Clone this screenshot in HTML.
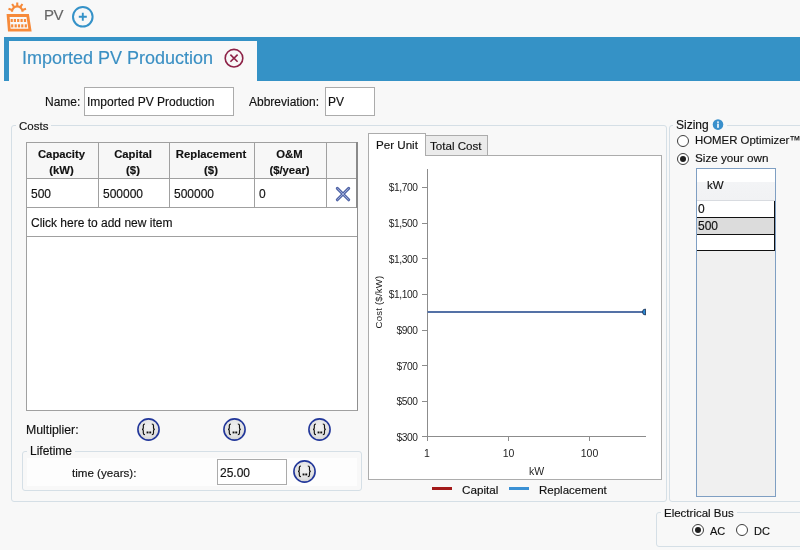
<!DOCTYPE html>
<html><head><meta charset="utf-8">
<style>
*{box-sizing:border-box;margin:0;padding:0}
body{-webkit-text-stroke:0.15px currentColor}
html,body{width:800px;height:550px;overflow:hidden;background:#f8f8f8;font-family:"Liberation Sans",sans-serif;color:#111}
.a{position:absolute}
.t{position:absolute;white-space:nowrap;font-size:12px;line-height:12px;will-change:transform}
.grp{position:absolute;border:1px solid #d5dfe6;border-radius:3px}
.lbl{position:absolute;background:#f8f8f8;padding:0 3px;white-space:nowrap;font-size:12px;line-height:12px;will-change:transform}
.inp{position:absolute;background:#fff;border:1px solid #ababab}
.btn{position:absolute;width:23px;height:23px;border-radius:50%;border:1.5px solid #2b3f9b;background:radial-gradient(circle at 50% 35%,#f4f4f4 0%,#e2e2e2 60%,#d4d4d4 100%)}
.btn span{position:absolute;left:0;right:0;top:4px;text-align:center;font-size:11px;line-height:12px;color:#111;letter-spacing:-0.5px}
.radio{position:absolute;width:12px;height:12px;border-radius:50%;border:1px solid #3c3c3c;background:#fff}
.radio.on::after{content:"";position:absolute;left:2px;top:2px;width:6px;height:6px;border-radius:50%;background:#1f1f1f}
</style></head><body>

<svg width="0" height="0" style="position:absolute"><defs>
<radialGradient id="bg" cx="50%" cy="40%" r="60%"><stop offset="0" stop-color="#f2f2f2"/><stop offset="0.7" stop-color="#e2e2e2"/><stop offset="1" stop-color="#d2d2d2"/></radialGradient>
<symbol id="mb" viewBox="0 0 23 23">
<circle cx="11.5" cy="11.5" r="10.6" fill="url(#bg)" stroke="#22379a" stroke-width="1.6"/>
<path d="M8 6 Q6.3 6 6.3 7.6 V9.9 Q6.3 11.3 5 11.3 Q6.3 11.3 6.3 12.7 V15.1 Q6.3 16.7 8 16.7 M14.8 6 Q16.5 6 16.5 7.6 V9.9 Q16.5 11.3 17.8 11.3 Q16.5 11.3 16.5 12.7 V15.1 Q16.5 16.7 14.8 16.7" fill="none" stroke="#111" stroke-width="1.15"/>
<rect x="9.6" y="13.5" width="1.9" height="1.9" fill="#111"/><rect x="12.3" y="13.5" width="1.9" height="1.9" fill="#111"/>
</symbol></defs></svg>
<!-- top header -->
<svg class="a" style="left:0;top:0" width="40" height="36" viewBox="0 0 40 36">
  <g fill="none" stroke="#f68a3a">
    <path d="M11.95 11.7 A5.3 5.3 0 0 1 22.55 11.7" stroke-width="2.2"/>
    <path d="M12.02 9.90 L8.50 8.76 M14.17 7.04 L12.11 3.97 M17.25 6.10 L17.25 2.40 M20.33 7.04 L22.39 3.97 M22.48 9.90 L26.00 8.76" stroke-width="2.1"/>
    <path d="M8.1 15.5 H27.7 L30 30.2 H9.3 Z" stroke-width="2.8" stroke-linejoin="miter"/>
  </g>
  <g fill="#f68a3a">
    <rect x="10.6" y="19" width="2.2" height="3"/><rect x="13.8" y="19" width="2.2" height="3"/><rect x="17.1" y="19" width="2.2" height="3"/><rect x="20.5" y="19" width="2.2" height="3"/><rect x="23.9" y="19" width="2.2" height="3"/>
    <rect x="11.1" y="24.3" width="2.2" height="3.1"/><rect x="14.6" y="24.3" width="2.2" height="3.1"/><rect x="17.9" y="24.3" width="2.2" height="3.1"/><rect x="21.2" y="24.3" width="2.2" height="3.1"/><rect x="24.7" y="24.3" width="2.2" height="3.1"/>
  </g>
</svg>
<div class="t" style="left:44px;top:7px;font-size:15px;line-height:15px;letter-spacing:-0.6px;color:#666">PV</div>
<svg class="a" style="left:70px;top:4px" width="26" height="26" viewBox="0 0 26 26">
  <circle cx="12.8" cy="12.8" r="9.8" fill="none" stroke="#3592c8" stroke-width="2"/>
  <path d="M8.8 12.8 H16.8 M12.8 8.8 V16.8" stroke="#3592c8" stroke-width="1.9"/>
</svg>

<!-- blue band + tab -->
<div class="a" style="left:4px;top:37px;width:796px;height:44px;background:#3592c6"></div>
<div class="a" style="left:9px;top:41px;width:248px;height:40px;background:#f8f8f8"></div>
<div class="t" style="left:22px;top:49px;font-size:18px;line-height:18px;color:#3a8fc3">Imported PV Production</div>
<svg class="a" style="left:222px;top:46px" width="24" height="24" viewBox="0 0 24 24">
  <circle cx="12" cy="12.2" r="8.8" fill="none" stroke="#8d2247" stroke-width="1.6"/>
  <path d="M8.4 8.6 L15.6 15.8 M15.6 8.6 L8.4 15.8" stroke="#8d2247" stroke-width="1.6"/>
</svg>

<!-- name row -->
<div class="t" style="left:45px;top:96px">Name:</div>
<div class="inp" style="left:84px;top:87px;width:150px;height:29px"></div>
<div class="t" style="left:87px;top:96px">Imported PV Production</div>
<div class="t" style="left:249px;top:96px">Abbreviation:</div>
<div class="inp" style="left:325px;top:87px;width:50px;height:29px"></div>
<div class="t" style="left:328px;top:96px">PV</div>

<!-- Costs group -->
<div class="grp" style="left:11px;top:125px;width:656px;height:377px"></div>
<div class="lbl" style="left:16px;top:120px;font-size:11.5px">Costs</div>


<!-- costs table -->
<div class="a" style="left:26px;top:142px;width:332px;height:269px;background:#fff;border:1px solid #a0a0a0;border-right-color:#8f8f8f"></div>
<div class="a" style="left:27px;top:143px;width:330px;height:35px;background:#f7f7f7"></div>
<div class="a" style="left:27px;top:178px;width:330px;height:1px;background:#a0a0a0"></div>
<div class="a" style="left:27px;top:207px;width:330px;height:1px;background:#a0a0a0"></div>
<div class="a" style="left:27px;top:236px;width:330px;height:1px;background:#a0a0a0"></div>
<div class="a" style="left:356px;top:142px;width:2px;height:66px;background:#8a8a8a"></div>
<div class="a" style="left:98px;top:143px;width:1px;height:64px;background:#a0a0a0"></div>
<div class="a" style="left:169px;top:143px;width:1px;height:64px;background:#a0a0a0"></div>
<div class="a" style="left:254px;top:143px;width:1px;height:64px;background:#a0a0a0"></div>
<div class="a" style="left:326px;top:143px;width:1px;height:64px;background:#a0a0a0"></div>
<div class="t" style="left:25.5px;width:71px;top:146px;text-align:center;font-weight:bold;font-size:11.3px;line-height:16px">Capacity<br>(kW)</div>
<div class="t" style="left:97.5px;width:70px;top:146px;text-align:center;font-weight:bold;font-size:11.3px;line-height:16px">Capital<br>($)</div>
<div class="t" style="left:168.5px;width:84px;top:146px;text-align:center;font-weight:bold;font-size:11.3px;line-height:16px">Replacement<br>($)</div>
<div class="t" style="left:253.5px;width:71px;top:146px;text-align:center;font-weight:bold;font-size:11.3px;line-height:16px">O&amp;M<br>($/year)</div>
<div class="t" style="left:31px;top:188px">500</div>
<div class="t" style="left:103px;top:188px">500000</div>
<div class="t" style="left:174px;top:188px">500000</div>
<div class="t" style="left:259px;top:188px">0</div>
<svg class="a" style="left:334px;top:185px" width="17" height="17" viewBox="0 0 17 17">
  <path d="M3.3 3.4 L14.7 14.8 M14.7 3.4 L3.3 14.8" stroke="#5064a6" stroke-width="3" stroke-linecap="round"/>
  <path d="M3.6 3.7 L14.4 14.5 M14.4 3.7 L3.6 14.5" stroke="#a9b7e0" stroke-width="0.9" stroke-linecap="round"/>
</svg>
<div class="t" style="left:31px;top:217px">Click here to add new item</div>

<!-- multipliers -->
<div class="t" style="left:26px;top:424px;font-size:12.3px">Multiplier:</div>
<svg class="a" style="left:137px;top:418px" width="23" height="23"><use href="#mb"/></svg>
<svg class="a" style="left:223px;top:418px" width="23" height="23"><use href="#mb"/></svg>
<svg class="a" style="left:308px;top:418px" width="23" height="23"><use href="#mb"/></svg>

<!-- lifetime -->
<div class="grp" style="left:22px;top:451px;width:340px;height:40px"></div>
<div class="a" style="left:27px;top:458px;width:330px;height:28px;background:#fdfdfd"></div>
<div class="lbl" style="left:27px;top:445px">Lifetime</div>
<div class="t" style="left:72px;top:467px;font-size:11.6px">time (years):</div>
<div class="inp" style="left:217px;top:459px;width:70px;height:26px"></div>
<div class="t" style="left:220px;top:467px">25.00</div>
<svg class="a" style="left:293px;top:460px" width="23" height="23"><use href="#mb"/></svg>


<!-- chart -->
<div class="a" style="left:368px;top:155px;width:294px;height:325px;background:#fff;border:1px solid #acacac"></div>
<div class="a" style="left:425px;top:135px;width:63px;height:21px;background:#ebebeb;border:1px solid #acacac"></div>
<div class="a" style="left:368px;top:133px;width:58px;height:23px;background:#fff;border:1px solid #acacac;border-bottom:none"></div>
<div class="t" style="left:376px;top:139px;font-size:11.6px">Per Unit</div>
<div class="t" style="left:430px;top:140px;font-size:11.6px">Total Cost</div>
<svg class="a" style="left:369px;top:156px;will-change:transform" width="292" height="323" viewBox="369 156 292 323">
  <g stroke="#8c8c8c" stroke-width="1" fill="none">
    <path d="M427.5 169 V436.5 H646"/>
    <path d="M422 187.5 H427 M422 223.5 H427 M422 258.5 H427 M422 294.5 H427 M422 330.5 H427 M422 365.5 H427 M422 401.5 H427 M422 436.5 H427"/>
    <path d="M427.5 436 V441 M508.5 436 V441 M589.5 436 V441"/>
  </g>
  <g font-family="Liberation Sans" font-size="10.2" letter-spacing="-0.4" fill="#1e1e1e" text-anchor="end">
    <text x="417.5" y="191.3">$1,700</text>
    <text x="417.5" y="227">$1,500</text>
    <text x="417.5" y="262.6">$1,300</text>
    <text x="417.5" y="298.2">$1,100</text>
    <text x="417.5" y="333.9">$900</text>
    <text x="417.5" y="369.5">$700</text>
    <text x="417.5" y="405.1">$500</text>
    <text x="417.5" y="440.7">$300</text>
  </g>
  <g font-family="Liberation Sans" font-size="10.5" fill="#1e1e1e" text-anchor="middle">
    <text x="427" y="457">1</text>
    <text x="508.5" y="457">10</text>
    <text x="589.5" y="457">100</text>
    <text x="536.5" y="475">kW</text>
    <text x="382" y="302" font-size="9.6" letter-spacing="0.2" transform="rotate(-90 382 302)">Cost ($/kW)</text>
  </g>
  <path d="M427.5 312 H645" stroke="#5471a6" stroke-width="1.8"/>
  <path d="M645.5 309 A3 3 0 0 0 645.5 315 Z" fill="#2d8ad6" stroke="#1c3050" stroke-width="0.8"/>
</svg>
<div class="a" style="left:432px;top:487px;width:20px;height:3px;background:#a31a1a"></div>
<div class="t" style="left:462px;top:484px;font-size:11.7px">Capital</div>
<div class="a" style="left:509px;top:487px;width:20px;height:3px;background:#3a90d4"></div>
<div class="t" style="left:539px;top:484px;font-size:11.5px">Replacement</div>

<!-- sizing -->
<div class="grp" style="left:669px;top:125px;width:140px;height:377px"></div>
<div class="lbl" style="left:673px;top:119px">Sizing<span style="display:inline-block;width:15px"></span></div>
<svg class="a" style="left:712px;top:119px" width="12" height="12" viewBox="0 0 12 12">
  <circle cx="6" cy="5.6" r="5.3" fill="#3a90cc"/>
  <rect x="5.2" y="4.6" width="1.6" height="4.2" fill="#fff"/><rect x="5.2" y="2.4" width="1.6" height="1.5" fill="#fff"/>
</svg>
<div class="radio" style="left:677px;top:135px"></div>
<div class="t" style="left:695px;top:134px;font-size:11.4px">HOMER Optimizer&#8482;</div>
<div class="radio on" style="left:677px;top:153px"></div>
<div class="t" style="left:695px;top:152px;font-size:11.7px">Size your own</div>
<div class="a" style="left:696px;top:168px;width:80px;height:329px;background:#f0f0f0;border:1px solid #7f9fc3"></div>
<div class="a" style="left:697px;top:169px;width:78px;height:32px;background:linear-gradient(#ffffff 0px,#ffffff 13px,#f3f4f6 13px,#f1f2f4 30px);border-bottom:1px solid #d8dbe0"></div>
<div class="t" style="left:707px;top:179px;font-size:11.5px">kW</div>
<div class="a" style="left:697px;top:201px;width:78px;height:50px;background:#fff;border-right:1px solid #111"></div>
<div class="a" style="left:697px;top:217px;width:77px;height:17px;background:#dcdcdc"></div>
<div class="a" style="left:697px;top:217px;width:78px;height:1px;background:#111"></div>
<div class="a" style="left:697px;top:234px;width:78px;height:1px;background:#111"></div>
<div class="a" style="left:697px;top:250px;width:78px;height:1px;background:#111"></div>
<div class="t" style="left:698px;top:203px">0</div>
<div class="t" style="left:698px;top:220px">500</div>

<!-- electrical bus -->
<div class="grp" style="left:656px;top:512px;width:160px;height:35px"></div>
<div class="lbl" style="left:661px;top:507px;font-size:11.5px">Electrical Bus</div>
<div class="radio on" style="left:692px;top:524px"></div>
<div class="t" style="left:710px;top:525px;font-size:11px">AC</div>
<div class="radio" style="left:736px;top:524px"></div>
<div class="t" style="left:754px;top:525px;font-size:11px">DC</div>

</body></html>
